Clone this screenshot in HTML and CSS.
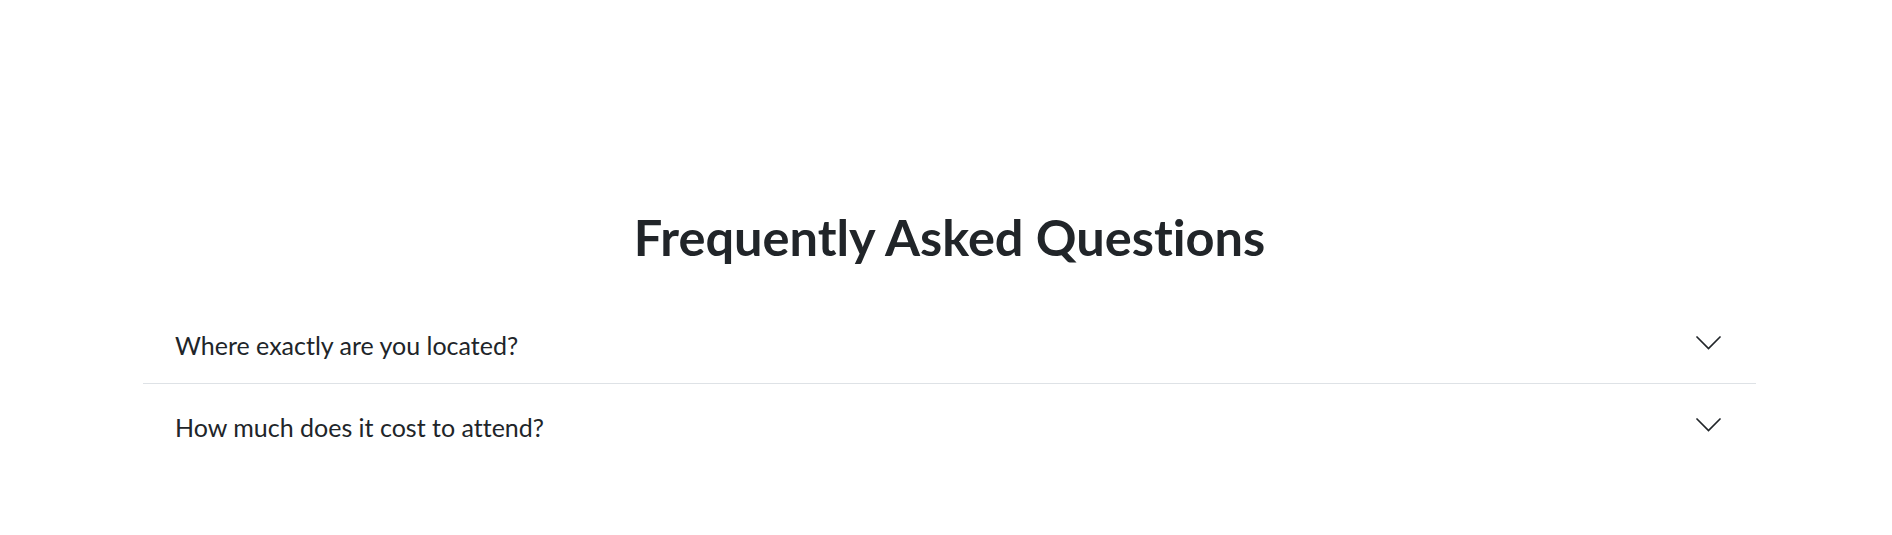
FILE: index.html
```html
<!DOCTYPE html>
<html lang="en">
<head>
<meta charset="utf-8">
<title>FAQ</title>
<link rel="stylesheet" href="styles.css">
</head>
<body>
<section class="faq">
  <h2 class="faq-title">Frequently Asked Questions</h2>
  <div class="accordion">
    <div class="acc-item">
      <span class="acc-q">Where exactly are you located?</span>
      <svg class="acc-icon" viewBox="0 0 25 14" width="25" height="14"><path d="M1 1 L12.5 12.5 L24 1" fill="none" stroke="#212529" stroke-width="1.7" stroke-linecap="round" stroke-linejoin="miter"/></svg>
    </div>
    <div class="acc-item">
      <span class="acc-q">How much does it cost to attend?</span>
      <svg class="acc-icon" viewBox="0 0 25 14" width="25" height="14"><path d="M1 1 L12.5 12.5 L24 1" fill="none" stroke="#212529" stroke-width="1.7" stroke-linecap="round" stroke-linejoin="miter"/></svg>
    </div>
  </div>
</section>
</body>
</html>
```

FILE: styles.css
```css
html, body {
  margin: 0;
  padding: 0;
  background: #ffffff;
}
body {
  font-family: "Lato", "Open Sans", sans-serif;
  font-variant-ligatures: none;
  color: #212529;
}
.faq {
  margin: 0 136px 0 143px;
  padding-top: 208px;
}
.faq-title {
  margin: 0 0 36px;
  text-align: center;
  font-size: 50.5px;
  line-height: 58px;
  font-weight: 700;
  color: #212529;
}
.accordion {
  display: flex;
  flex-direction: column;
}
.acc-item {
  display: flex;
  align-items: center;
  justify-content: space-between;
  height: 81px;
  padding: 0 35px 0 32px;
  border-bottom: 1px solid #dee2e6;
}
.acc-item:last-child {
  border-bottom: none;
}
.acc-q {
  font-size: 25px;
  line-height: 30px;
  padding-top: 5px;
  color: #212529;
}
.acc-icon {
  display: block;
  flex: none;
}
```
